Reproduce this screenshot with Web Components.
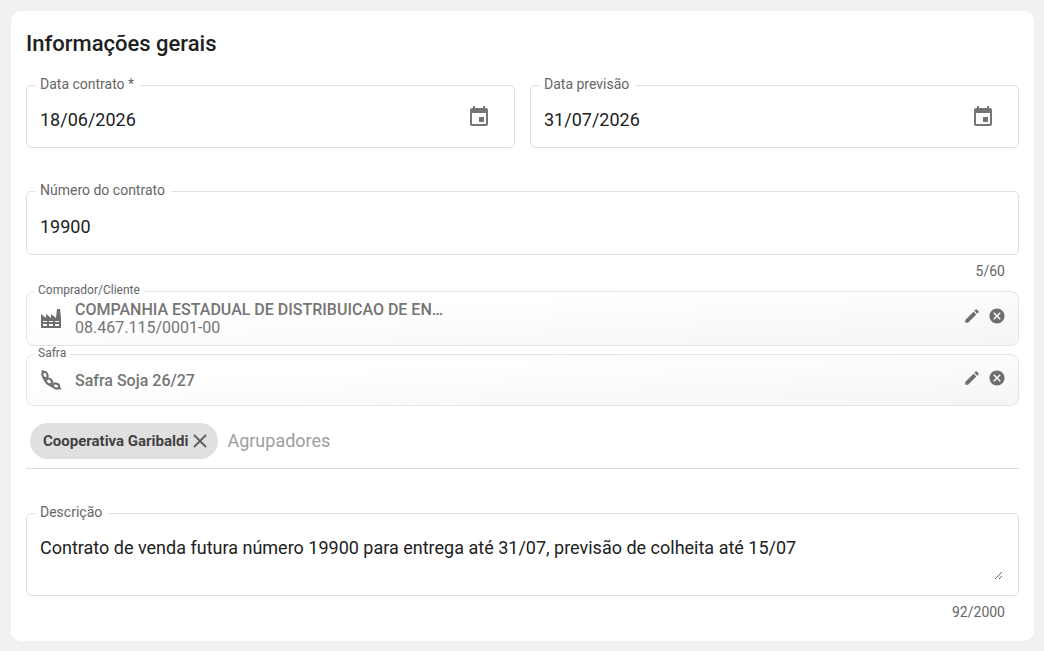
<!DOCTYPE html>
<html lang="pt-BR">
<head>
    <meta charset="utf-8">
    <title>Contrato</title>
    <style>
        body {
            margin: 0;
            padding: 11px 10px 10px 11px;
            background: #f1f1f1;
            color: #212121;
            font-family: Roboto, sans-serif;
        }

        .row {
            display: grid;
            grid-template-columns: 1fr 1fr;
            gap: 15px;
        }

        .space {
            margin-top: 35px;
        }

        chips-field + .space {
            margin-top: 36px;
        }
    </style>
</head>
<body>
    <form-card heading="Informações gerais">
        <div class="row">
            <text-field label="Data contrato *" value="18/06/2026" calendar></text-field>
            <text-field label="Data previsão" value="31/07/2026" calendar></text-field>
        </div>
        <text-field class="space" label="Número do contrato" value="19900" max="60"></text-field>
        <entity-field label="Comprador/Cliente" name="COMPANHIA ESTADUAL DE DISTRIBUICAO DE EN…" detail="08.467.115/0001-00">
            <svg slot="icon" width="22" height="22" viewBox="0 0 22 22" fill="#6e6e6e">
                <path fill-rule="evenodd" d="M1 21V7l5 4V7l5 4V7l5 4 1-9h3l1 9v10zM3 14v1h4v-1zm6 0v1h4v-1zm6 0v1h4v-1zM3 17v2h4v-2zm6 0v2h4v-2zm6 0v2h4v-2z"/>
            </svg>
        </entity-field>
        <entity-field label="Safra" name="Safra Soja 26/27">
            <svg slot="icon" width="22" height="22" viewBox="0 0 22 22" fill="none" stroke="#6e6e6e" stroke-width="2">
                <ellipse cx="5" cy="6" rx="2.4" ry="3.2" transform="rotate(-25 5 6)"/>
                <ellipse cx="9" cy="12.5" rx="3.2" ry="2.6" transform="rotate(35 9 12.5)"/>
                <ellipse cx="16" cy="17" rx="3.2" ry="2.4" transform="rotate(20 16 17)"/>
                <path d="M2 1.500l2 2M3 8l3 5M8 15l5 3M18 18l3 2"/>
            </svg>
        </entity-field>
        <chips-field label="Agrupadores">
            <chip-item>Cooperativa Garibaldi</chip-item>
        </chips-field>
        <text-field class="space" label="Descrição" multiline max="2000" value="Contrato de venda futura número 19900 para entrega até 31/07, previsão de colheita até 15/07"></text-field>
    </form-card>

    <script>
        class FormCard extends HTMLElement {
            constructor() {
                super()
                this.attachShadow({ mode: 'open' }).innerHTML = `
                    <style>
                        :host {
                            display: block;
                            padding: 15px 15px 21px;
                            background: #fff;
                            border-radius: 10px;
                        }

                        h2 {
                            margin: 0 0 15px;
                            font-size: 22px;
                            font-weight: 500;
                            line-height: 36px;
                        }
                    </style>
                    <h2>${this.getAttribute('heading')}</h2>
                    <slot></slot>
                `
            }
        }

        class TextField extends HTMLElement {
            constructor() {
                super()
                const value = this.getAttribute('value')
                const max = this.getAttribute('max')
                const control = this.hasAttribute('multiline')
                    ? `<textarea id="control">${value}</textarea>`
                    : `<input id="control" type="text" value="${value}">`
                const button = `
                    <button type="button" aria-label="Abrir calendário">
                        <svg width="24" height="24" viewBox="0 0 24 24" fill="#757575">
                            <path d="M17 12h-5v5h5v-5zM16 1v2H8V1H6v2H5c-1.11 0-1.99.9-1.99 2L3 19c0 1.1.89 2 2 2h14c1.1 0 2-.9 2-2V5c0-1.1-.9-2-2-2h-1V1h-2zm3 18H5V8h14v11z"/>
                        </svg>
                    </button>`

                this.attachShadow({ mode: 'open' }).innerHTML = `
                    <style>
                        :host {
                            display: block;
                        }

                        fieldset {
                            display: flex;
                            align-items: flex-start;
                            min-width: 0;
                            margin: 0;
                            padding: 0 13px 0 8px;
                            border: 1px solid #e0e0e0;
                            border-radius: 5px;
                        }

                        legend {
                            padding: 0 6px 2px 5px;
                            font-size: 14px;
                            line-height: 15px;
                            color: #666;
                        }

                        input,
                        textarea {
                            flex: 1;
                            min-width: 0;
                            box-sizing: border-box;
                            margin: 0;
                            padding: 0 0 2px 5px;
                            border: 0;
                            outline: 0;
                            background: none;
                            color: inherit;
                            font: 18px Roboto, sans-serif;
                        }

                        input {
                            height: 54px;
                        }

                        :host([calendar]) input {
                            height: 53px;
                        }

                        textarea {
                            height: 58px;
                            margin: 0 2px 15px 0;
                            padding-top: 15px;
                            line-height: 22px;
                            resize: vertical;
                        }

                        button {
                            display: grid;
                            place-items: center;
                            width: 44px;
                            height: 46px;
                            padding: 0;
                            border: 0;
                            background: none;
                            cursor: pointer;
                        }

                        .count {
                            margin: 8px 14px 0;
                            font-size: 14px;
                            line-height: 16px;
                            text-align: right;
                            color: #666;
                        }
                    </style>
                    <fieldset>
                        <legend><label for="control">${this.getAttribute('label')}</label></legend>
                        ${control}
                        ${this.hasAttribute('calendar') ? button : ''}
                    </fieldset>
                    ${max ? `<div class="count">${value.length}/${max}</div>` : ''}
                `
            }
        }

        class EntityField extends HTMLElement {
            constructor() {
                super()
                const detail = this.getAttribute('detail')
                this.attachShadow({ mode: 'open' }).innerHTML = `
                    <style>
                        :host {
                            display: block;
                            margin-top: 1px;
                            color: #757575;
                        }

                        :host([detail]) {
                            margin-top: 5px;
                        }

                        fieldset {
                            min-width: 0;
                            margin: 0;
                            padding: 0 12px 8px 7px;
                            border: 1px solid #e4e4e4;
                            border-radius: 8px;
                            background: linear-gradient(to bottom right, #fff 30%, #f5f5f5);
                        }

                        legend {
                            padding: 0 4px 2px;
                            font-size: 12px;
                            line-height: 13px;
                            color: #666;
                        }

                        .body {
                            display: flex;
                            align-items: center;
                            min-height: 35px;
                            padding-left: 6px;
                        }

                        .text {
                            flex: 1;
                            min-width: 0;
                            padding: 2px 13px 0;
                            font-size: 16px;
                            line-height: 18px;
                        }

                        .name {
                            font-weight: 500;
                        }

                        .actions {
                            display: flex;
                            gap: 7px;
                            padding-bottom: 4px;
                        }

                        button {
                            display: grid;
                            padding: 0;
                            border: 0;
                            background: none;
                            cursor: pointer;
                        }

                        ::slotted(svg) {
                            display: block;
                        }
                    </style>
                    <fieldset>
                        <legend>${this.getAttribute('label')}</legend>
                        <div class="body">
                            <slot name="icon"></slot>
                            <div class="text">
                                <div class="name">${this.getAttribute('name')}</div>
                                ${detail ? `<div>${detail}</div>` : ''}
                            </div>
                            <div class="actions">
                                <button type="button" aria-label="Editar">
                                    <svg width="18" height="18" viewBox="0 0 24 24" fill="#6e6e6e">
                                        <path d="M3 17.25V21h3.75L17.81 9.94l-3.75-3.75L3 17.25zM20.71 7.04a1 1 0 0 0 0-1.41l-2.34-2.34a1 1 0 0 0-1.41 0l-1.83 1.83 3.75 3.75 1.83-1.83z"/>
                                    </svg>
                                </button>
                                <button type="button" aria-label="Remover">
                                    <svg width="18" height="18" viewBox="0 0 24 24" fill="#6e6e6e">
                                        <path d="M12 2C6.47 2 2 6.47 2 12s4.47 10 10 10 10-4.47 10-10S17.53 2 12 2zm5 13.59L15.59 17 12 13.41 8.41 17 7 15.59 10.59 12 7 8.41 8.41 7 12 10.59 15.59 7 17 8.41 13.41 12 17 15.59z"/>
                                    </svg>
                                </button>
                            </div>
                        </div>
                    </fieldset>
                `
            }
        }

        class ChipItem extends HTMLElement {
            constructor() {
                super()
                this.attachShadow({ mode: 'open' }).innerHTML = `
                    <style>
                        :host {
                            display: flex;
                            align-items: center;
                            gap: 4px;
                            height: 36px;
                            padding: 0 10px 0 13px;
                            border-radius: 18px;
                            background: #e0e0e0;
                            color: #424242;
                            font-size: 15px;
                            font-weight: 700;
                        }

                        button {
                            display: grid;
                            padding: 0;
                            border: 0;
                            background: none;
                            cursor: pointer;
                        }
                    </style>
                    <slot></slot>
                    <button type="button" aria-label="Remover">
                        <svg width="16" height="16" viewBox="0 0 16 16" stroke="#616161" stroke-width="2">
                            <path d="M2 2l12 12M14 2L2 14"/>
                        </svg>
                    </button>
                `
            }
        }

        class ChipsField extends HTMLElement {
            constructor() {
                super()
                const label = this.getAttribute('label')
                this.attachShadow({ mode: 'open' }).innerHTML = `
                    <style>
                        :host {
                            display: flex;
                            align-items: center;
                            gap: 9px;
                            margin-top: 8px;
                            padding: 9px 4px;
                            border-bottom: 1px solid #dcdcdc;
                        }

                        input {
                            flex: 1;
                            min-width: 0;
                            padding: 0 0 2px;
                            border: 0;
                            outline: 0;
                            background: none;
                            font: 18px Roboto, sans-serif;
                        }

                        input::placeholder {
                            color: #9e9e9e;
                        }
                    </style>
                    <slot></slot>
                    <input type="text" aria-label="${label}" placeholder="${label}">
                `
            }
        }

        customElements.define('form-card', FormCard)
        customElements.define('text-field', TextField)
        customElements.define('entity-field', EntityField)
        customElements.define('chip-item', ChipItem)
        customElements.define('chips-field', ChipsField)
    </script>
</body>
</html>
